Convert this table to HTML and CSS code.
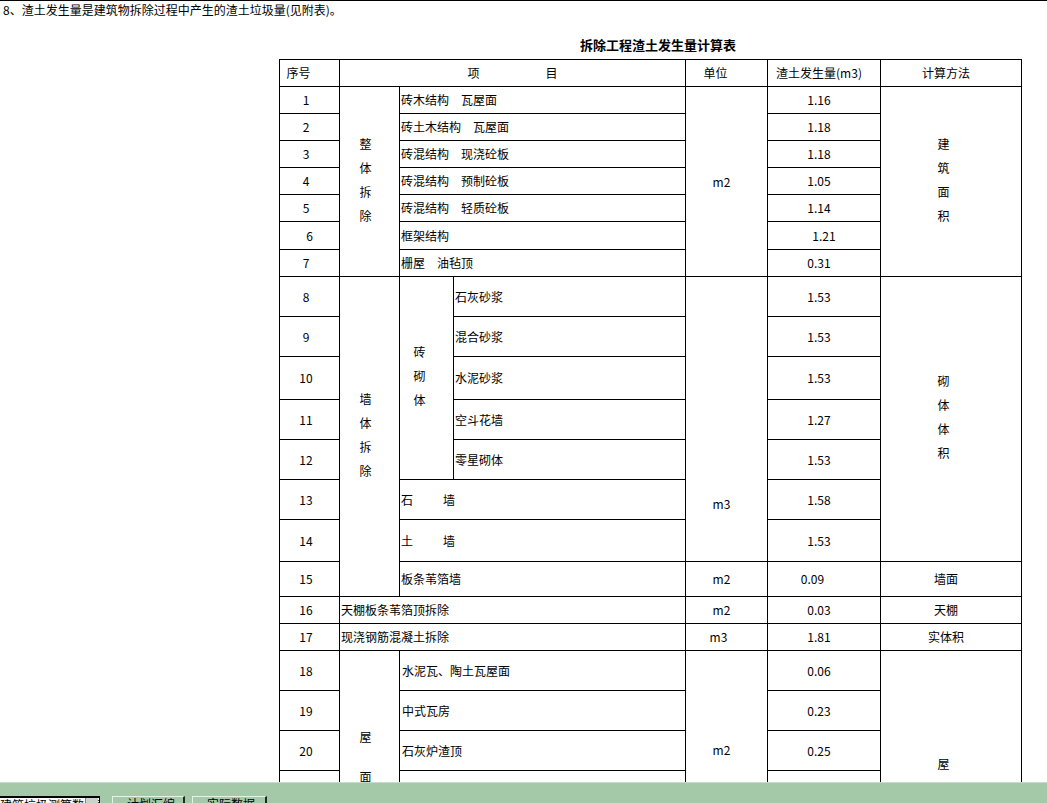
FILE: index.html
```html
<!DOCTYPE html>
<html lang="zh-CN">
<head>
<meta charset="utf-8">
<title>拆除工程渣土发生量计算表</title>
<link rel="stylesheet" href="styles.css">
</head>
<body>
<div class="page">
  <p class="intro">8、渣土发生量是建筑物拆除过程中产生的渣土垃圾量(见附表)。</p>
  <div class="title">拆除工程渣土发生量计算表</div>
  <table class="sheet">
    <colgroup>
      <col class="c1"><col class="c2"><col class="c3"><col class="c4"><col class="c5"><col class="c6"><col class="c7">
    </colgroup>
    <tr class="h27">
      <td class="hd num">序号</td>
      <td class="hd" colspan="3">项<span class="gap66"></span>目</td>
      <td class="hd unit">单位</td>
      <td class="hd val">渣土发生量(m3)</td>
      <td class="hd meth">计算方法</td>
    </tr>
    <tr class="h27">
      <td class="num">1</td>
      <td class="vert g2" rowspan="7">整<br>体<br>拆<br>除</td>
      <td class="item" colspan="2">砖木结构　瓦屋面</td>
      <td class="unit" rowspan="7">m2</td>
      <td class="val">1.16</td>
      <td class="vert meth" rowspan="7">建<br>筑<br>面<br>积</td>
    </tr>
    <tr class="h27"><td class="num">2</td><td class="item" colspan="2">砖土木结构　瓦屋面</td><td class="val">1.18</td></tr>
    <tr class="h27"><td class="num">3</td><td class="item" colspan="2">砖混结构　现浇砼板</td><td class="val">1.18</td></tr>
    <tr class="h27"><td class="num">4</td><td class="item" colspan="2">砖混结构　预制砼板</td><td class="val">1.05</td></tr>
    <tr class="h27"><td class="num">5</td><td class="item" colspan="2">砖混结构　轻质砼板</td><td class="val">1.14</td></tr>
    <tr class="h28"><td class="num shift">6</td><td class="item" colspan="2">框架结构</td><td class="val shift">1.21</td></tr>
    <tr class="h27"><td class="num">7</td><td class="item" colspan="2">栅屋　油毡顶</td><td class="val">0.31</td></tr>
    <tr class="h40">
      <td class="num">8</td>
      <td class="vert g2" rowspan="8">墙<br>体<br>拆<br>除</td>
      <td class="vert g3" rowspan="5">砖<br>砌<br>体</td>
      <td class="item">石灰砂浆</td>
      <td class="unit unit-low" rowspan="7">m3</td>
      <td class="val">1.53</td>
      <td class="vert meth" rowspan="7">砌<br>体<br>体<br>积</td>
    </tr>
    <tr class="h40"><td class="num">9</td><td class="item">混合砂浆</td><td class="val">1.53</td></tr>
    <tr class="h43"><td class="num">10</td><td class="item">水泥砂浆</td><td class="val">1.53</td></tr>
    <tr class="h40"><td class="num">11</td><td class="item">空斗花墙</td><td class="val">1.27</td></tr>
    <tr class="h40"><td class="num">12</td><td class="item">零星砌体</td><td class="val">1.53</td></tr>
    <tr class="h40"><td class="num">13</td><td class="item" colspan="2">石<span class="gap30"></span>墙</td><td class="val">1.58</td></tr>
    <tr class="h42"><td class="num">14</td><td class="item" colspan="2">土<span class="gap30"></span>墙</td><td class="val">1.53</td></tr>
    <tr class="h35"><td class="num">15</td><td class="item" colspan="2">板条苇箔墙</td><td class="unit">m2</td><td class="val left">0.09</td><td class="meth">墙面</td></tr>
    <tr class="h27"><td class="num">16</td><td class="item" colspan="3">天棚板条苇箔顶拆除</td><td class="unit">m2</td><td class="val">0.03</td><td class="meth">天棚</td></tr>
    <tr class="h27"><td class="num">17</td><td class="item" colspan="3">现浇钢筋混凝土拆除</td><td class="unit m3">m3</td><td class="val">1.81</td><td class="meth">实体积</td></tr>
    <tr class="h40">
      <td class="num">18</td>
      <td class="vert g2 roof" rowspan="6">屋<br>面<br>拆<br>除</td>
      <td class="item item18" colspan="2">水泥瓦、陶土瓦屋面</td>
      <td class="unit unit-roof" rowspan="6">m2</td>
      <td class="val">0.06</td>
      <td class="vert meth meth-roof" rowspan="6">屋<br>面<br>面<br>积</td>
    </tr>
    <tr class="h40"><td class="num">19</td><td class="item item18" colspan="2">中式瓦房</td><td class="val">0.23</td></tr>
    <tr class="h40"><td class="num">20</td><td class="item item18" colspan="2">石灰炉渣顶</td><td class="val">0.25</td></tr>
    <tr class="h40"><td class="num">21</td><td class="item item18" colspan="2">油毡屋面</td><td class="val">0.05</td></tr>
    <tr class="h40"><td class="num">22</td><td class="item item18" colspan="2">平屋面</td><td class="val">0.08</td></tr>
    <tr class="h40"><td class="num">23</td><td class="item item18" colspan="2">其他屋面</td><td class="val">0.10</td></tr>
  </table>
</div>
<div class="tabbar">
  <div class="tab active">建筑垃圾测算数量表<span class="tab-btn"></span></div>
  <div class="tab t2">计划汇编</div>
  <div class="tab t3">实际数据</div>
</div>
</body>
</html>
```

FILE: styles.css
```css
html, body {
  margin: 0;
  padding: 0;
  background: #ffffff;
}
body {
  font-family: "Noto Sans CJK SC", "Noto Sans", sans-serif;
  font-size: 12px;
  color: #000;
  border-top: 1px solid #000;
}
.page {
  padding: 2px 0 60px 0;
}
.intro {
  margin: 0 0 0 3px;
  line-height: 14px;
  height: 14px;
}
.title {
  margin: 20px 0 0 279px;
  width: 742px;
  padding-left: 16px;
  box-sizing: border-box;
  text-align: center;
  font-weight: bold;
  font-size: 13px;
  line-height: 16px;
  height: 16px;
}
.sheet {
  margin: 6px 0 0 279px;
  border-collapse: collapse;
  table-layout: fixed;
  width: 743px;
}
.c1 { width: 60px; }
.c2 { width: 60px; }
.c3 { width: 54px; }
.c4 { width: 232px; }
.c5 { width: 82px; }
.c6 { width: 113px; }
.c7 { width: 141px; }
.sheet td {
  border: 1px solid #000;
  padding: 0;
  line-height: 14px;
  text-align: center;
  vertical-align: middle;
  white-space: nowrap;
  overflow: hidden;
}
.h27 { height: 27px; }
.h28 { height: 28px; }
.h35 { height: 35px; }
.h40 { height: 40px; }
.h42 { height: 42px; }
.h43 { height: 43px; }
.sheet td.num { padding-right: 7px; }
.sheet td.hd.num { padding-right: 22px; }
.sheet td.num.shift { padding-right: 0; }
.sheet td.item {
  text-align: left;
  padding-left: 1px;
}
.sheet td.item18 { padding-left: 2px; }
.sheet td.unit { padding-right: 10px; }
.sheet td.hd.unit { padding-right: 22px; }
.sheet td.unit.m3 { padding-right: 16px; }
.sheet td.val { padding-right: 10px; }
.sheet td.val.shift { padding-right: 0; }
.sheet td.val.left { padding-right: 23px; }
.sheet td.meth { padding-right: 10px; }
.sheet td.vert {
  line-height: 24px;
  padding-bottom: 4px;
}
.sheet td.g2 { padding-right: 8px; }
.sheet td.g3 { padding-right: 14px; }
.sheet td.vert.meth { padding-right: 15px; }
.sheet td.unit-low {
  vertical-align: bottom;
  padding-bottom: 50px;
}
.sheet td.roof {
  vertical-align: top;
  line-height: 40px;
  padding-top: 66px;
  padding-bottom: 0;
}
.sheet td.unit-roof {
  vertical-align: top;
  padding-top: 92px;
}
.sheet td.meth-roof {
  vertical-align: top;
  padding-top: 101px;
  padding-bottom: 0;
}
.gap66 {
  display: inline-block;
  width: 66px;
}
.gap30 {
  display: inline-block;
  width: 30px;
}
.tabbar {
  position: fixed;
  left: 0;
  right: 0;
  bottom: 0;
  height: 20px;
  background: #a4c9a9;
  border-top: 1px solid #c4dec7;
  display: flex;
  align-items: flex-end;
  overflow: hidden;
}
.tab {
  position: relative;
  box-sizing: border-box;
  height: 7px;
  padding: 0 0 0 14px;
  line-height: 14px;
  font-size: 12px;
  color: #000;
  background: #a4c9a9;
  border-top: 1px solid #e6f1e7;
  border-left: 1px solid #e6f1e7;
  border-right: 2px solid #1e2a1f;
  overflow: hidden;
  white-space: nowrap;
}
.tab.active {
  width: 100px;
  background: #ffffff;
  border-top: 2px solid #000;
  border-left: 0;
  border-right: 1px solid #000;
  padding: 0 16px 0 0;
}
.tab.t2 {
  width: 73px;
  margin-left: 12px;
}
.tab.t3 {
  width: 75px;
  margin-left: 7px;
}
.tab-btn {
  position: absolute;
  right: 1px;
  top: 0;
  width: 12px;
  height: 7px;
  background: #c8d4c9;
  border-left: 1px solid #7a8a7b;
}
```
